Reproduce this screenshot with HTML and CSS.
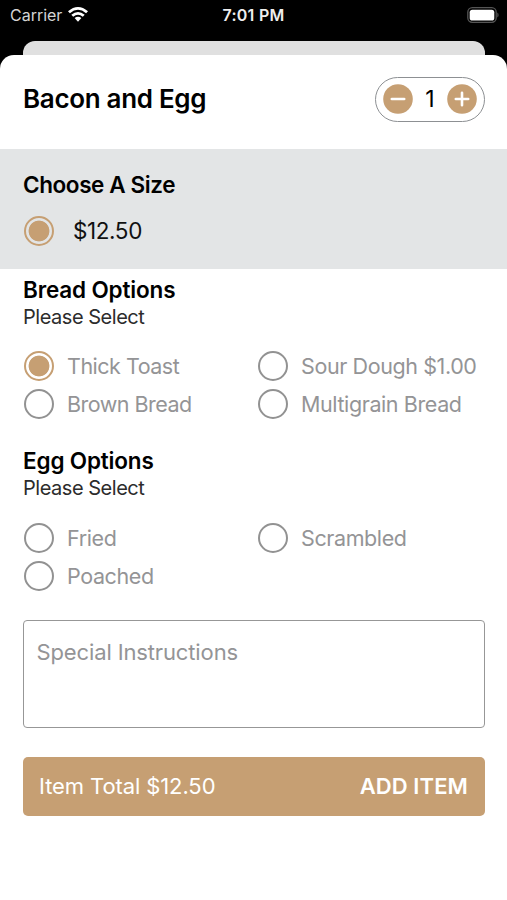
FILE: index.html
```html
<!DOCTYPE html>
<html lang="en">
<head>
<meta charset="utf-8">
<title>Bacon and Egg</title>
<link rel="stylesheet" href="styles.css">
</head>
<body>
<header class="status">
  <div class="carrier"><span class="t carrier-name">Carrier</span>
    <svg class="wifi" width="20" height="15" viewBox="0 0 20 15"><path d="M0 4.3Q10-4.2 20 4.3L18.1 6.3Q10-.6 1.9 6.3Z"/><path d="M3.3 7.7Q10 2.1 16.7 7.7L14.8 9.7Q10 5.7 5.2 9.7Z"/><path d="M6.6 11.1Q10 8.5 13.4 11.1L10 14.7Z"/></svg>
  </div>
  <span class="t time">7:01 PM</span>
  <svg class="battery" width="32" height="16" viewBox="0 0 32 16"><rect x=".8" y=".7" width="28.4" height="14.6" rx="4.5" fill="none" stroke="#555" stroke-width="1.3"/><rect x="2.7" y="2.7" width="24.6" height="10.8" rx="2.6" fill="#fff"/><path d="M30.3 5.6Q31.6 6.4 31.6 8T30.3 10.4Z" fill="#555"/></svg>
</header>
<div class="behind"></div>
<main class="sheet">
  <div class="title-row">
    <h1><span class="t title">Bacon and Egg</span></h1>
    <div class="stepper">
      <svg width="30" height="30" viewBox="0 0 30 30"><circle cx="15" cy="15" r="14.8"/><path d="M8.8 15H21.2"/></svg>
      <span class="qty">1</span>
      <svg width="30" height="30" viewBox="0 0 30 30"><circle cx="15" cy="15" r="14.8"/><path d="M8.8 15H21.2M15 8.8V21.2"/></svg>
    </div>
  </div>
  <section class="size">
    <h2><span class="t choose">Choose A Size</span></h2>
    <div class="option price"><i class="radio on"></i><span class="t cost">$12.50</span></div>
  </section>
  <section class="group">
    <h2><span class="t bread">Bread Options</span></h2>
    <p><span class="t please">Please Select</span></p>
    <div class="options">
      <div class="option"><i class="radio on"></i><span class="t thick">Thick Toast</span></div>
      <div class="option"><i class="radio"></i><span class="t sour">Sour Dough $1.00</span></div>
      <div class="option"><i class="radio"></i><span class="t brown">Brown Bread</span></div>
      <div class="option"><i class="radio"></i><span class="t multi">Multigrain Bread</span></div>
    </div>
  </section>
  <section class="group eggs">
    <h2><span class="t egg">Egg Options</span></h2>
    <p><span class="t please">Please Select</span></p>
    <div class="options">
      <div class="option"><i class="radio"></i><span class="t fried">Fried</span></div>
      <div class="option"><i class="radio"></i><span class="t scrambled">Scrambled</span></div>
      <div class="option"><i class="radio"></i><span class="t poached">Poached</span></div>
    </div>
  </section>
  <div class="notes"><span class="t special">Special Instructions</span></div>
  <div class="add"><span class="t total">Item Total $12.50</span><span class="t add-item">ADD ITEM</span></div>
</main>
</body>
</html>
```
FILE: styles.css
```css
* { box-sizing: border-box; }
body { margin: 0; height: 900px; overflow: hidden; background: #000; color: #000; font-family: Inter, "Liberation Sans", sans-serif; }
h1, h2, p { margin: 0; }
.t { white-space: nowrap; }
.status { height: 41px; padding: 0 8px 12px 10px; display: grid; grid-template-columns: 1fr auto 1fr; align-items: center; color: #fff; font-size: 16px; }
.carrier { display: flex; align-items: center; gap: 6px; color: #d4d4d4; }
.carrier-name { letter-spacing: -.02px; }
.wifi { fill: #fff; }
.time { font-weight: 600; color: #eee; letter-spacing: .25px; margin-right: 2px; }
.battery { justify-self: end; }
.behind { height: 14px; margin: 0 22px 0 23px; background: #e0e0e0; border-radius: 12px 12px 0 0; }
.sheet { height: 845px; background: #fff; border-radius: 14px 14px 0 0; }
.title-row { height: 94px; padding: 0 22px 6px 23px; display: flex; justify-content: space-between; align-items: center; }
h1 { font-size: 26px; line-height: 32px; font-weight: 600; letter-spacing: -.32px; }
.stepper { width: 110px; height: 45px; padding: 0 6.5px; border: 1.5px solid #8d9093; border-radius: 23px; display: flex; align-items: center; justify-content: space-between; font-size: 23px; }
.stepper circle { fill: #c69f73; }
.stepper path { stroke: #fff; stroke-width: 2.6; stroke-linecap: round; }
.size { height: 120px; padding: 21px 23px 0; background: #e3e5e6; }
h2 { font-size: 22.5px; line-height: 30px; font-weight: 600; letter-spacing: -.16px; }
.choose { letter-spacing: -.4px; }
.option { display: flex; align-items: center; height: 38px; gap: 13px; color: #949496; font-size: 21.5px; letter-spacing: -.4px; padding-left: 1px; }
.price { margin-top: 12px; gap: 19px; color: #111; font-size: 22.5px; }
.cost { margin-bottom: 1px; }
.radio { width: 30px; height: 30px; flex: none; border: 2px solid #929292; border-radius: 50%; }
.radio.on { border-color: #c69f73; background: radial-gradient(circle, #c69f73 10px, transparent 10.8px); }
.thick { letter-spacing: -.5px; }
.brown { letter-spacing: -.52px; }
.group { height: 172px; padding: 6px 23px 0; }
p { font-size: 20px; line-height: 24px; color: #2c2c2c; letter-spacing: -.47px; }
.options { display: grid; grid-template-columns: 234px 1fr; margin-top: 18px; }
.eggs h2 { margin-top: -1px; }
.eggs .options { margin-top: 19px; }
.notes { height: 108px; margin: 7px 22px 0 23px; padding: 17px 12.5px; border: 1.5px solid #979797; border-radius: 4px; color: #949496; font-size: 22px; line-height: 28px; letter-spacing: -.13px; }
.add { height: 59px; margin: 29px 22px 0 23px; padding: 0 17px 2px 16px; border-radius: 5px; background: #c69f73; color: #fff; display: flex; justify-content: space-between; align-items: center; font-size: 22px; letter-spacing: -.1px; }
.add-item { font-weight: 600; letter-spacing: .1px; }
```
